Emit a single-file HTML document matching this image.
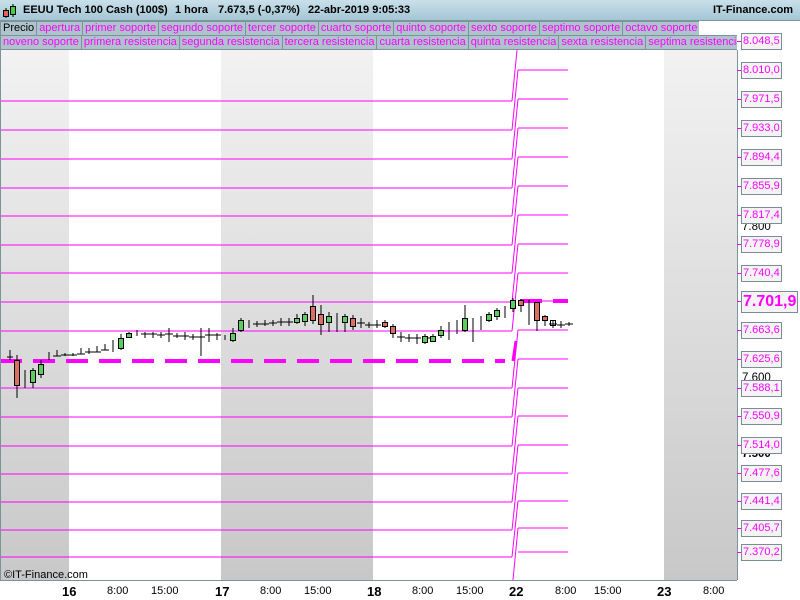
<!DOCTYPE html>
<html><head><meta charset="utf-8"><style>
*{margin:0;padding:0;box-sizing:border-box}
body{width:800px;height:600px;overflow:hidden;background:#fff;font-family:"Liberation Sans",sans-serif;position:relative}
#title{position:absolute;left:0;top:0;width:800px;height:21px;background:linear-gradient(#c9e0ea,#a4c6d4);border-bottom:1px solid #7d97a2;font-size:11px;font-weight:bold;color:#000;white-space:nowrap}
#title span{position:absolute;top:4px;white-space:nowrap}
.row{position:absolute;left:0;width:737px;height:15px;display:flex;overflow:hidden;background:#a9bfc8}
.row div{flex:none;height:15px;border:1px solid #7d939c;background:#aec4cd;color:#ff00ff;font-size:11px;line-height:13px;padding:0 2px;white-space:nowrap;margin-right:-1px}
.lbl{position:absolute;left:741px;width:41px;height:17px;border:1px solid #7a8c94;background:#f4f4f4;color:#ff00ff;font-size:11px;line-height:15px;padding-left:1px;white-space:nowrap;overflow:hidden}
.tk{position:absolute;left:737px;width:4px;height:1px;background:#ff00ff}
.blk{position:absolute;left:742px;font-size:11.5px;color:#000}
.xl{position:absolute;top:585px;font-size:11px;color:#000}
.xb{position:absolute;top:584px;font-size:13px;font-weight:bold;color:#000}
</style></head><body>
<div id="title">
<svg style="position:absolute;left:3px;top:3px" width="14" height="16"><line x1="3" y1="5" x2="3" y2="15" stroke="#000"/><rect x="0.5" y="7.5" width="5" height="6" fill="#e26060" stroke="#000"/><line x1="10" y1="1" x2="10" y2="14" stroke="#000"/><rect x="7.5" y="3.5" width="5" height="8" fill="#40d040" stroke="#000"/></svg>
<span style="left:23px">EEUU Tech 100 Cash (100$)</span><span style="left:175px">1 hora</span><span style="left:218px">7.673,5 (-0,37%)</span><span style="left:308px">22-abr-2019 9:05:33</span><span style="left:713px">IT-Finance.com</span></div>
<div class="row" style="top:21px;width:699px"><div style="color:#000">Precio</div><div>apertura</div><div>primer soporte</div><div>segundo soporte</div><div>tercer soporte</div><div>cuarto soporte</div><div>quinto soporte</div><div>sexto soporte</div><div>septimo soporte</div><div>octavo soporte</div></div>
<div class="row" style="top:35px"><div>noveno soporte</div><div>primera resistencia</div><div>segunda resistencia</div><div>tercera resistencia</div><div>cuarta resistencia</div><div>quinta resistencia</div><div>sexta resistencia</div><div>septima resistencia</div></div>
<svg style="position:absolute;left:0;top:50px" width="737" height="530">
<defs><linearGradient id="g" x1="0" y1="0" x2="0" y2="1"><stop offset="0" stop-color="#f2f2f2"/><stop offset="1" stop-color="#c8c8c8"/></linearGradient></defs>
<rect x="0" y="0" width="69" height="530" fill="url(#g)"/>
<rect x="221" y="0" width="152" height="530" fill="url(#g)"/>
<rect x="664" y="0" width="73" height="530" fill="url(#g)"/>
<g stroke="#ff00ff" stroke-width="1" fill="none">
<path d="M0 51H512M0 80H512M0 109H512M0 138H512M0 166H512M0 195H512M0 223H512M0 252H512M0 281H512M0 338H512M0 367H512M0 396H512M0 424H512M0 452H512M0 480H512M0 507H512"/>
<path d="M518 20H568M518 49H568M518 78H568M518 107H568M518 136H568M518 165H568M518 194H568M518 223H568M518 251H568M518 280H568M518 309H568M518 338H568M518 366H568M518 395H568M518 423H568M518 451H568M518 478H568M518 502H568"/>
<path d="M512 51L518 -10M512 80L518 20M512 109L518 49M512 138L518 78M512 166L518 107M512 195L518 136M512 223L518 165M512 252L518 194M512 281L518 223M512 338L518 280M512 367L518 309M512 396L518 338M512 424L518 366M512 452L518 395M512 480L518 423M512 507L518 451M512 540L518 478"/>
</g>
<path d="M0 311H505M520 251H568" stroke="#ff00ff" stroke-width="4" stroke-dasharray="22,11"/>
<path d="M513 311L516 291" stroke="#ff00ff" stroke-width="3"/>
<g stroke="#000" stroke-width="1">
<path d="M10 300V310M17 305V348M25 320V338M33 318V338M41 310V328M49 302V310M57 300V306M65 303V306M73 303V306M81 298V304M89 298V304M97 296V302M105 294V300M113 290V302M121 284V300M129 282V288M137 280V286M145 282V288M153 282V288M161 282V288M169 278V292M177 283V288M185 282V290M193 284V290M201 278V306M209 278V292M217 283V290M225 285V290M233 278V292M241 268V282M249 270V278M257 271V277M265 270V276M273 270V276M281 268V276M289 268V276M297 264V274M305 262V276M313 245V274M321 255V285M329 262V282M337 263V282M345 264V282M353 265V280M361 268V278M369 272V278M377 270V278M385 270V278M393 274V288M401 282V292M409 284V292M417 284V294M425 284V294M433 284V292M441 276V288M449 272V290M457 270V284M465 255V282M473 268V292M481 266V280M489 262V272M497 258V270M505 256V268M513 248V262M521 249V262M529 250V275M537 258V281M545 265V276M553 270V278M561 271V278M569 272V276"/>
<path d="M7 307H13M53 306H61M61 305H69M69 305H77M77 304H85M85 302H93M93 302H101M101 300H109M141 284H149M149 284H157M157 285H165M165 284H173M173 286H181M181 286H189M189 287H197M197 287H205M205 285H213M213 285H221M253 274H261M261 274H269M269 273H277M277 272H285M285 272H293M357 273H365M365 275H373M373 275H381M397 287H405M405 288H413M413 288H421M425 288H433M549 274H557M557 275H565M565 274H573"/>
</g>
<g stroke="#000" stroke-width="1" fill="#5ccc5c">
<rect x="30.5" y="320.5" width="5" height="12"/><rect x="38.5" y="314.5" width="5" height="10"/><rect x="118.5" y="288.5" width="5" height="10"/><rect x="126.5" y="283.5" width="5" height="4"/><rect x="230.5" y="283.5" width="5" height="7"/><rect x="238.5" y="270.5" width="5" height="10"/><rect x="294.5" y="268.5" width="5" height="4"/><rect x="302.5" y="264.5" width="5" height="7"/><rect x="326.5" y="266.5" width="5" height="6"/><rect x="342.5" y="266.5" width="5" height="6"/><rect x="422.5" y="286.5" width="5" height="6"/><rect x="430.5" y="286.5" width="5" height="5"/><rect x="438.5" y="280.5" width="5" height="5"/><rect x="462.5" y="268.5" width="5" height="12"/><rect x="486.5" y="264.5" width="5" height="6"/><rect x="494.5" y="260.5" width="5" height="6"/><rect x="510.5" y="250.5" width="5" height="8"/>
</g>
<g stroke="#000" stroke-width="1" fill="#dd6e64">
<rect x="14.5" y="310.5" width="5" height="25"/><rect x="310.5" y="256.5" width="5" height="14"/><rect x="318.5" y="264.5" width="5" height="10"/><rect x="350.5" y="268.5" width="5" height="8"/><rect x="382.5" y="272.5" width="5" height="4"/><rect x="390.5" y="276.5" width="5" height="7"/><rect x="518.5" y="250.5" width="5" height="5"/><rect x="534.5" y="252.5" width="5" height="18"/><rect x="542.5" y="266.5" width="5" height="4"/><rect x="550.5" y="270.5" width="5" height="5" fill="none"/>
</g>
<text x="4" y="528" font-size="11" font-family="Liberation Sans" fill="#000">©IT-Finance.com</text>
</svg>
<div style="position:absolute;left:737px;top:50px;width:1px;height:530px;background:#7d939c"></div>
<div style="position:absolute;left:0;top:580px;width:737px;height:1px;background:#7d939c"></div>
<div style="position:absolute;left:0;top:50px;width:1px;height:530px;background:#7d939c"></div>
<div class="blk" style="top:69px;font-weight:bold">8.000</div>
<div class="blk" style="top:221px">7.800</div>
<div class="blk" style="top:372px">7.600</div>
<div class="blk" style="top:448px;font-weight:bold">7.500</div>
<div class="tk" style="top:41px"></div><div class="lbl" style="top:33px">8.048,5</div>
<div class="tk" style="top:70px"></div><div class="lbl" style="top:62px">8.010,0</div>
<div class="tk" style="top:99px"></div><div class="lbl" style="top:91px">7.971,5</div>
<div class="tk" style="top:128px"></div><div class="lbl" style="top:120px">7.933,0</div>
<div class="tk" style="top:157px"></div><div class="lbl" style="top:149px">7.894,4</div>
<div class="tk" style="top:186px"></div><div class="lbl" style="top:178px">7.855,9</div>
<div class="tk" style="top:215px"></div><div class="lbl" style="top:207px">7.817,4</div>
<div class="tk" style="top:244px"></div><div class="lbl" style="top:236px">7.778,9</div>
<div class="tk" style="top:273px"></div><div class="lbl" style="top:265px">7.740,4</div>
<div class="tk" style="top:301px"></div><div class="lbl" style="top:291px;width:57px;height:22px;font-size:16px;font-weight:bold;line-height:20px">7.701,9</div>
<div class="tk" style="top:330px"></div><div class="lbl" style="top:322px">7.663,6</div>
<div class="tk" style="top:359px"></div><div class="lbl" style="top:351px">7.625,6</div>
<div class="tk" style="top:388px"></div><div class="lbl" style="top:380px">7.588,1</div>
<div class="tk" style="top:416px"></div><div class="lbl" style="top:408px">7.550,9</div>
<div class="tk" style="top:445px"></div><div class="lbl" style="top:437px">7.514,0</div>
<div class="tk" style="top:473px"></div><div class="lbl" style="top:465px">7.477,6</div>
<div class="tk" style="top:501px"></div><div class="lbl" style="top:493px">7.441,4</div>
<div class="tk" style="top:528px"></div><div class="lbl" style="top:520px">7.405,7</div>
<div class="tk" style="top:552px"></div><div class="lbl" style="top:544px">7.370,2</div>
<div class="xb" style="left:62px">16</div><div class="xl" style="left:107px">8:00</div><div class="xl" style="left:151px">15:00</div>
<div class="xb" style="left:215px">17</div><div class="xl" style="left:260px">8:00</div><div class="xl" style="left:304px">15:00</div>
<div class="xb" style="left:367px">18</div><div class="xl" style="left:412px">8:00</div><div class="xl" style="left:456px">15:00</div>
<div class="xb" style="left:509px">22</div><div class="xl" style="left:555px">8:00</div><div class="xl" style="left:594px">15:00</div>
<div class="xb" style="left:657px">23</div><div class="xl" style="left:703px">8:00</div>
</body></html>
